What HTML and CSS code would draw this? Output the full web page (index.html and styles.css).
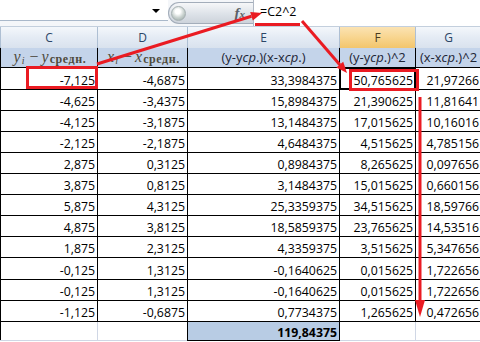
FILE: index.html
```html
<!DOCTYPE html>
<html>
<head>
<meta charset="utf-8">
<link rel="stylesheet" href="styles.css">
</head>
<body>
<div class="sheet">
  <div class="fbar">
    <div class="namebox"><span class="dd"></span></div>
    <div class="fxbtn"><span class="orb"></span><span class="fx">f<span class="fxs">x</span></span></div>
    <div class="formula">=C2^2</div>
  </div>
  <div class="colheads">
    <div>C</div><div>D</div><div>E</div><div class="sel">F</div><div>G</div>
  </div>
  <div class="grid">
    <div class="h math"><span class="v">y</span><span class="ii">i</span><span class="minus">−</span><span class="v">y</span><span class="sr">средн.</span></div>
    <div class="h math"><span class="v">x</span><span class="ii">i</span><span class="minus">−</span><span class="v">x</span><span class="sr">средн.</span></div>
    <div class="h">(y-y<i>ср</i> .)(x-x<i>ср</i> .)</div>
    <div class="h">(y-y<i>ср</i> .)^2</div>
    <div class="h">(x-x<i>ср</i> .)^2</div>

    <div>-7,125</div><div>-4,6875</div><div>33,3984375</div><div class="active">50,765625</div><div>21,97266</div>
    <div>-4,625</div><div>-3,4375</div><div>15,8984375</div><div>21,390625</div><div>11,81641</div>
    <div>-4,125</div><div>-3,1875</div><div>13,1484375</div><div>17,015625</div><div>10,16016</div>
    <div>-2,125</div><div>-2,1875</div><div>4,6484375</div><div>4,515625</div><div>4,785156</div>
    <div>2,875</div><div>0,3125</div><div>0,8984375</div><div>8,265625</div><div>0,097656</div>
    <div>3,875</div><div>0,8125</div><div>3,1484375</div><div>15,015625</div><div>0,660156</div>
    <div>5,875</div><div>4,3125</div><div>25,3359375</div><div>34,515625</div><div>18,59766</div>
    <div>4,875</div><div>3,8125</div><div>18,5859375</div><div>23,765625</div><div>14,53516</div>
    <div>1,875</div><div>2,3125</div><div>4,3359375</div><div>3,515625</div><div>5,347656</div>
    <div>-0,125</div><div>1,3125</div><div>-0,1640625</div><div>0,015625</div><div>1,722656</div>
    <div>-0,125</div><div>1,3125</div><div>-0,1640625</div><div>0,015625</div><div>1,722656</div>
    <div>-1,125</div><div>-0,6875</div><div>0,7734375</div><div>1,265625</div><div>0,472656</div>
  </div>
  <div class="sumrow">
    <div></div><div></div><div class="total">119,84375</div><div></div><div></div>
  </div>
  <svg class="annot" width="480" height="342" viewBox="0 0 480 342">
    <g fill="none" stroke="#ea1b22" stroke-width="3">
      <rect x="27.5" y="67.5" width="69" height="20"/>
      <rect x="350.5" y="70.5" width="67" height="19"/>
      <line x1="97" y1="64" x2="251.5" y2="16.3"/>
      <line x1="255" y1="24.5" x2="300" y2="24.5"/>
      <line x1="302" y1="21" x2="339.8" y2="64.7"/>
      <line x1="420" y1="97" x2="420" y2="301"/>
    </g>
    <g fill="#ea1b22">
      <polygon points="262,13 252.8,20.6 250.2,11.9"/>
      <polygon points="347,73 336.4,67.6 343.2,61.8"/>
      <polygon points="415,300 425,300 420,317"/>
    </g>
  </svg>
</div>
</body>
</html>
```

FILE: styles.css
```css
html, body {
  margin: 0;
  padding: 0;
  background: #fff;
}
body {
  width: 480px;
  height: 342px;
  overflow: hidden;
  font-family: "Open Sans", "Liberation Sans", sans-serif;
}
.sheet {
  position: relative;
  width: 480px;
  height: 342px;
  overflow: hidden;
}

/* formula bar */
.fbar {
  display: flex;
  height: 26px;
  background: #f4f6f9;
}
.namebox {
  width: 168px;
  height: 21px;
  box-sizing: border-box;
  background: #fff;
  border-bottom: 1px solid #a9b8ca;
  display: flex;
  justify-content: flex-end;
  align-items: center;
  padding-right: 8px;
}
.dd {
  width: 0;
  height: 0;
  border-left: 4px solid transparent;
  border-right: 4px solid transparent;
  border-top: 4px solid #000;
  margin-top: 2px;
}
.fxbtn {
  width: 85px;
  height: 22px;
  margin-top: 2px;
  box-sizing: border-box;
  border: 1px solid #a3adba;
  border-right: none;
  border-radius: 11px 0 0 11px;
  background: linear-gradient(#f6f7f9, #dde2e8 55%, #cdd3db);
  display: flex;
  align-items: center;
  justify-content: space-between;
  padding: 0 8px 0 2px;
}
.orb {
  width: 15px;
  height: 15px;
  border-radius: 50%;
  background: radial-gradient(circle at 45% 35%, #ffffff 0 22%, #c9d2cf 55%, #93a19f 100%);
  border: 1px solid #a6b0b2;
  box-sizing: border-box;
}
.fx {
  font-family: "Liberation Serif", serif;
  font-style: italic;
  font-weight: bold;
  font-size: 15px;
  color: #5a5f66;
  line-height: 16px;
}
.fxs {
  font-size: 11px;
  margin-left: 0;
}
.formula {
  flex: 1;
  background: #fff;
  border-left: 1px solid #b0b8c4;
  font-size: 12.5px;
  line-height: 14px;
  padding: 5px 0 0 6px;
  color: #000;
}

/* column headers */
.colheads {
  display: grid;
  grid-template-columns: 96px 89px 151px 75px 65px;
  column-gap: 1px;
  padding-left: 1px;
  background: #aebfd3;
  border-top: 1px solid #c3cfdd;
  border-bottom: 1px solid #9eb1c7;
  height: 20px;
}
.colheads div {
  background: linear-gradient(#f4f7fb, #e4ebf4 50%, #d9e2ee);
  text-align: center;
  font-size: 12px;
  line-height: 20px;
  padding-top: 1px;
  box-sizing: border-box;
  color: #2b4566;
}
.colheads .sel {
  background: linear-gradient(#fbe3b3, #f8d58f 50%, #f3c56c);
  color: #4a3a20;
}

/* data grid */
.grid {
  display: grid;
  grid-template-columns: 96px 89px 151px 75px 65px;
  grid-template-rows: 19px 21px 20px 20px 20px 20px 20px 20px 20px 20px 21px 20px 20px;
  gap: 1px;
  padding: 0 0 1px 1px;
  background: #000;
}
.grid div {
  background: #fff;
  display: flex;
  justify-content: flex-end;
  align-items: flex-end;
  padding: 0 2px 1px 0;
  font-size: 12.3px;
  line-height: 14px;
  color: #000;
  white-space: nowrap;
  overflow: hidden;
}
.grid .h {
  background: #c4d4ea;
  justify-content: center;
  align-items: center;
  padding: 0;
  font-size: 13px;
  line-height: 19px;
  color: #1e2636;
}
.grid .h i {
  font-style: italic;
}
.grid .math {
  display: block;
  text-align: center;
  font-family: "Liberation Serif", serif;
  color: #4e4a3c;
  font-size: 16px;
  line-height: 17px;
  padding: 0 0 0 2px;
}
.math .v {
  font-style: italic;
}
.math .ii {
  font-style: italic;
  font-size: 10px;
  vertical-align: -2px;
  margin-left: 1px;
}
.math .minus {
  margin: 0 3px 0 5px;
}
.math .sr {
  font-size: 12px;
  font-weight: bold;
  letter-spacing: 0.6px;
  vertical-align: -1px;
  margin-left: 1px;
}
.grid .active {
  box-shadow: inset 0 0 0 1px #000;
}

/* total row */
.sumrow {
  display: grid;
  grid-template-columns: 96px 89px 151px 75px 65px;
  grid-template-rows: 18px;
  column-gap: 1px;
  padding: 0 0 1px 1px;
  background: #d0d7e5;
}
.sumrow div {
  background: #fff;
}
.sumrow div:first-child {
  box-shadow: -1px 0 0 #000;
}
.sumrow .total {
  background: #b8cce4;
  outline: 1px solid #000;
  display: flex;
  justify-content: flex-end;
  align-items: flex-end;
  padding-right: 2px;
  font-size: 12.3px;
  line-height: 14px;
  font-weight: bold;
  color: #000;
}

/* annotation overlay */
.annot {
  position: absolute;
  left: 0;
  top: 0;
  pointer-events: none;
}
```
